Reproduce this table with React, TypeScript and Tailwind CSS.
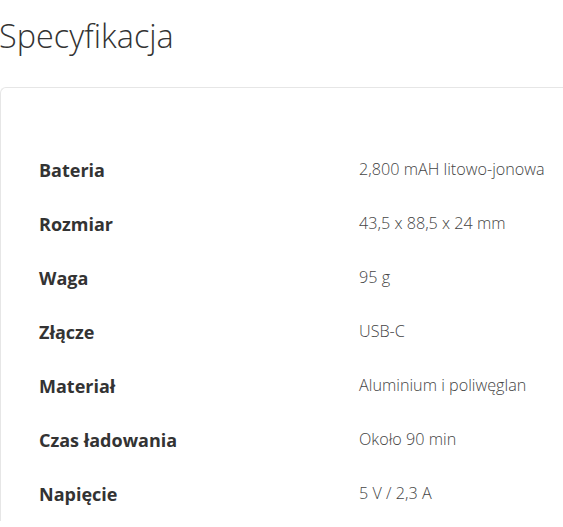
import React from "react";

const rows: [string, string][] = [
  ["Bateria", "2,800 mAH litowo-jonowa"],
  ["Rozmiar", "43,5 x 88,5 x 24 mm"],
  ["Waga", "95 g"],
  ["Złącze", "USB-C"],
  ["Materiał", "Aluminium i poliwęglan"],
  ["Czas ładowania", "Około 90 min"],
  ["Napięcie", "5 V / 2,3 A"],
];

export default function App() {
  return (
    <div
      className="w-[563px] h-[527px] overflow-hidden bg-white"
      style={{ fontFamily: '"Open Sans", sans-serif' }}
    >
      <h1 className="text-[32.4px] font-light leading-[38px] text-[#333] pt-[16px] ml-[-1px] m-0 whitespace-nowrap">
        Specyfikacja
      </h1>
      <div className="mt-[33px] w-[600px] border-t border-l border-[#e6e6e6] rounded-tl-[6px] pt-[55px] pl-[38px]">
        {rows.map(([k, v]) => (
          <div key={k} className="flex items-center h-[54px]">
            <div className="w-[320px] text-[18px] font-bold text-[#333]">{k}</div>
            <div className="text-[16.2px] font-light text-[#444] -mt-[2px]">{v}</div>
          </div>
        ))}
      </div>
    </div>
  );
}
